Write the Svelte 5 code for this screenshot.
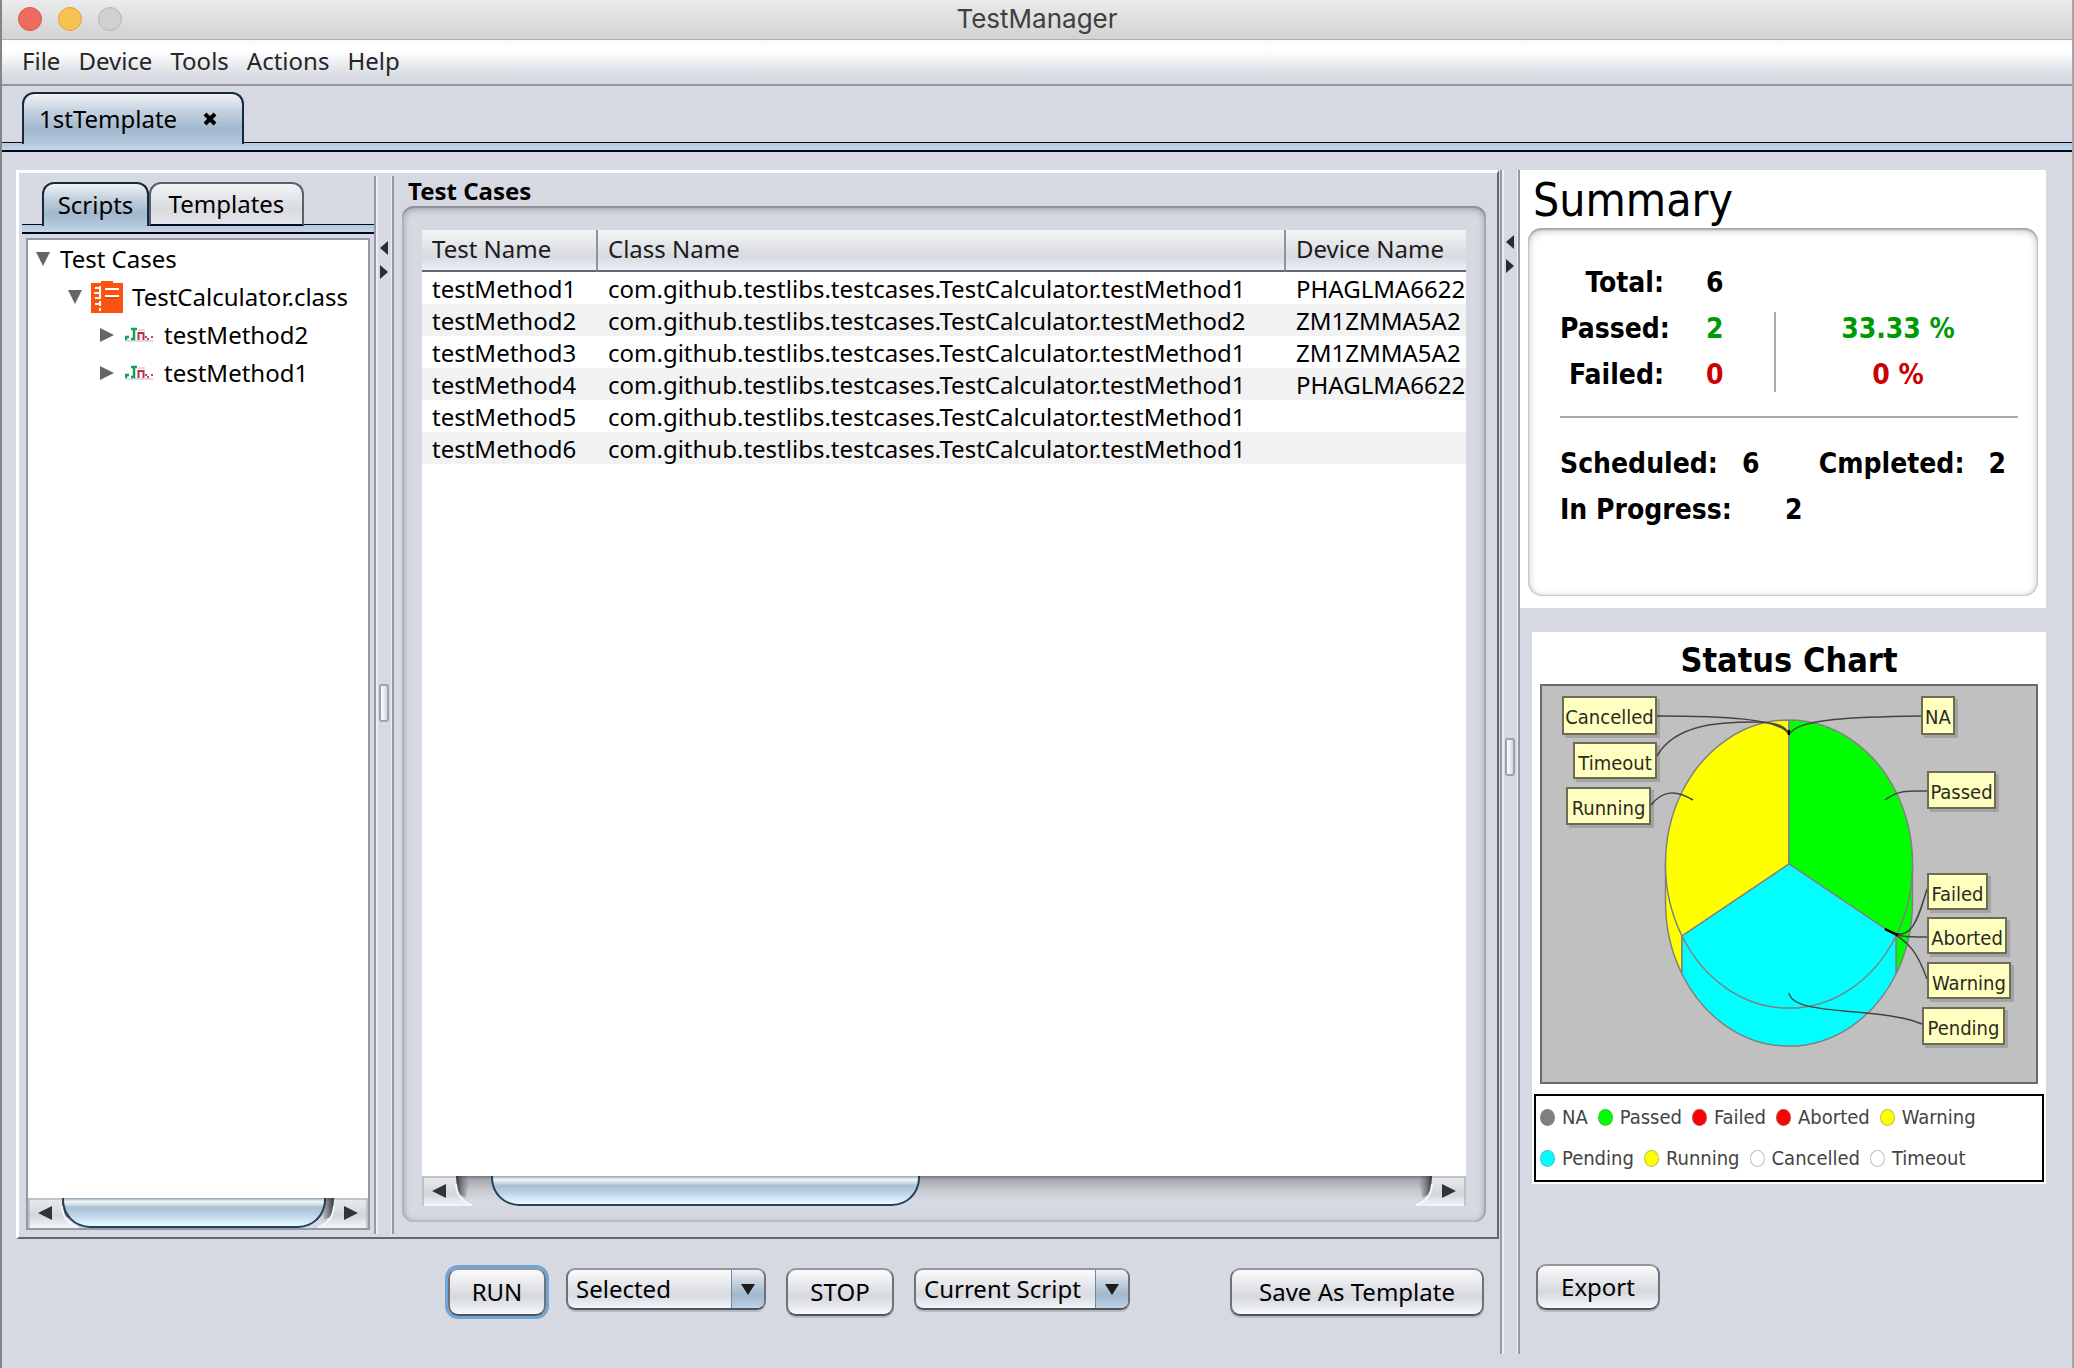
<script>
  const menus = ['File', 'Device', 'Tools', 'Actions', 'Help'];

  const prefix = 'com.github.testlibs.testcases.TestCalculator.';
  const rows = [
    { name: 'testMethod1', cls: prefix + 'testMethod1', device: 'PHAGLMA6622' },
    { name: 'testMethod2', cls: prefix + 'testMethod2', device: 'ZM1ZMMA5A2' },
    { name: 'testMethod3', cls: prefix + 'testMethod1', device: 'ZM1ZMMA5A2' },
    { name: 'testMethod4', cls: prefix + 'testMethod1', device: 'PHAGLMA6622' },
    { name: 'testMethod5', cls: prefix + 'testMethod1', device: '' },
    { name: 'testMethod6', cls: prefix + 'testMethod1', device: '' },
  ];

  const labels = [
    { text: 'Cancelled', x: 22, y: 12, w: 95, h: 39 },
    { text: 'Timeout', x: 33, y: 58, w: 84, h: 37 },
    { text: 'Running', x: 26, y: 103, w: 85, h: 38 },
    { text: 'NA', x: 381, y: 12, w: 34, h: 39 },
    { text: 'Passed', x: 387, y: 87, w: 69, h: 38 },
    { text: 'Failed', x: 387, y: 189, w: 61, h: 37 },
    { text: 'Aborted', x: 387, y: 233, w: 80, h: 37 },
    { text: 'Warning', x: 387, y: 278, w: 84, h: 37 },
    { text: 'Pending', x: 382, y: 323, w: 83, h: 38 },
  ];

  const legend = [
    [
      ['NA', 'gray'],
      ['Passed', 'green'],
      ['Failed', 'red'],
      ['Aborted', 'red'],
      ['Warning', 'yellow'],
    ],
    [
      ['Pending', 'cyan'],
      ['Running', 'yellow'],
      ['Cancelled', 'white'],
      ['Timeout', 'white'],
    ],
  ];

  let scope = $state('Selected');
  let source = $state('Current Script');
</script>

{#snippet splitter()}
  <div class="splitter" role="separator" aria-orientation="vertical">
    <button class="nudge" aria-label="Collapse left">
      <svg width="8" height="14" viewBox="0 0 8 14"><path d="M8 0V14L0 7Z" fill="#2b2b2d" /></svg>
    </button>
    <button class="nudge" aria-label="Collapse right">
      <svg width="8" height="14" viewBox="0 0 8 14"><path d="M0 0V14L8 7Z" fill="#2b2b2d" /></svg>
    </button>
    <span class="grip"></span>
  </div>
{/snippet}

{#snippet scrollEnd(dir)}
  <button class="scroll-end to-{dir}" aria-label="Scroll {dir}">
    <svg width="50" height="30" viewBox="0 0 50 30">
      <defs>
        <linearGradient id="end-{dir}" x1="0" y1="0" x2="0" y2="1">
          <stop offset="0" stop-color="#e9ecef" />
          <stop offset="0.6" stop-color="#d3d7db" />
          <stop offset="1" stop-color="#f4f6f9" />
        </linearGradient>
        <linearGradient id="shade-{dir}" x1="0" y1="0" x2="1" y2="0">
          <stop offset="0" stop-color="#333338" />
          <stop offset="1" stop-color="#77777d" stop-opacity="0" />
        </linearGradient>
      </defs>
      <g transform={dir === 'right' ? 'matrix(-1 0 0 1 50 0)' : null}>
        <path d="M34 0H48L44 22L36 18Z" fill="url(#shade-{dir})" />
        <path d="M0 0H34V8Q35 24 50 29V30H0Z" fill="url(#end-{dir})" />
        <path d="M34 8Q35 24 50 29" fill="none" stroke="#f7f8fa" stroke-width="2" />
        <path d="M0 1H34M1 0V30" stroke="#b4b8bd" stroke-width="1.5" />
        <path d="M24 8V22L10 15Z" fill="#333437" />
      </g>
    </svg>
  </button>
{/snippet}

{#snippet unitIcon()}
  <svg class="unit" width="28" height="16" viewBox="0 0 28 16" aria-hidden="true">
    <path d="M0 14H28" stroke="#dcdcdc" stroke-width="2" />
    <path d="M1 13V10H4M6 2H12M9 2V12H6" fill="none" stroke="#12a05c" stroke-width="2.5" />
    <path d="M13 3H20" stroke="#f6cdd3" stroke-width="2" />
    <path d="M13.500 5V13M18.500 5V13M13 6H19" fill="none" stroke="#b8324a" stroke-width="2" />
    <path d="M21 9V11M23 11V13M27 9V11" stroke="#c04558" stroke-width="2" />
  </svg>
{/snippet}

<div class="window">
  <header class="titlebar">
    <div class="lights">
      <button class="light close" aria-label="Close"></button>
      <button class="light min" aria-label="Minimize"></button>
      <button class="light max" aria-label="Zoom"></button>
    </div>
    <span class="title">TestManager</span>
    <div></div>
  </header>

  <nav class="menubar">
    {#each menus as m}
      <button>{m}</button>
    {/each}
  </nav>

  <div class="tabs main-tabs">
    <div class="tab active">
      <span>1stTemplate</span>
      <button class="tab-close" aria-label="Close tab">
        <svg width="14" height="14" viewBox="0 0 14 14"><path d="M2 2L12 12M12 2L2 12" stroke="#000" stroke-width="4" /></svg>
      </button>
    </div>
  </div>
  <div class="strip"></div>

  <main class="workspace">
    <section class="editor">
      <div class="panel">
        <div class="side">
          <div class="tabs side-tabs" role="tablist">
            <button class="tab active" role="tab" aria-selected="true">Scripts</button>
            <button class="tab" role="tab" aria-selected="false">Templates</button>
          </div>
          <div class="strip"></div>
          <div class="tree-box">
            <ul class="tree">
              <li class="lvl0">
                <svg width="14" height="14" viewBox="0 0 14 14"><path d="M0 0H14L7 14Z" fill="#666" /></svg>
                <span>Test Cases</span>
              </li>
              <li class="lvl1">
                <svg width="14" height="14" viewBox="0 0 14 14"><path d="M0 0H14L7 14Z" fill="#666" /></svg>
                <svg class="class-icon" width="32" height="32" viewBox="0 0 32 32" aria-hidden="true">
                  <path d="M0 2H10V0H22V2H32V32H0Z" fill="#fb5412" />
                  <path d="M9 5V30M4 7H9M3 12H9M4 17H9M4 23H9" fill="none" stroke="#fff" stroke-width="2" />
                  <path d="M14 8H28M14 15H28" stroke="#fff" stroke-width="2" />
                  <path d="M14 17H28" stroke="#c8410c" stroke-width="1" />
                  <path d="M9 18V20M9 25V27" stroke="#fb5412" stroke-width="3" />
                </svg>
                <span>TestCalculator.class</span>
              </li>
              {#each ['testMethod2', 'testMethod1'] as t}
                <li class="lvl2">
                  <svg width="14" height="14" viewBox="0 0 14 14"><path d="M0 0V14L14 7Z" fill="#666" /></svg>
                  {@render unitIcon()}
                  <span>{t}</span>
                </li>
              {/each}
            </ul>
            <div class="scrollbar">
              {@render scrollEnd('left')}
              <div class="track"><div class="thumb full"></div></div>
              {@render scrollEnd('right')}
            </div>
          </div>
        </div>

        {@render splitter()}

        <div class="cases">
          <h2>Test Cases</h2>
          <div class="group">
            <div class="table-box">
              <table>
                <colgroup><col class="c1" /><col class="c2" /><col /></colgroup>
                <thead>
                  <tr><th>Test Name</th><th>Class Name</th><th>Device Name</th></tr>
                </thead>
                <tbody>
                  {#each rows as r}
                    <tr><td>{r.name}</td><td>{r.cls}</td><td>{r.device}</td></tr>
                  {/each}
                </tbody>
              </table>
            </div>
            <div class="scrollbar">
              {@render scrollEnd('left')}
              <div class="track"><div class="thumb part"></div></div>
              {@render scrollEnd('right')}
            </div>
          </div>
        </div>
      </div>

      <div class="toolbar">
        <button class="btn run">RUN</button>
        <div class="combo scope">
          <select bind:value={scope} aria-label="Run scope">
            <option>Selected</option>
            <option>All</option>
          </select>
          <span class="arrow"><svg width="14" height="11" viewBox="0 0 14 11"><path d="M0 0H14L7 11Z" fill="#1d1d1f" /></svg></span>
        </div>
        <button class="btn stop">STOP</button>
        <div class="combo source">
          <select bind:value={source} aria-label="Stop target">
            <option>Current Script</option>
            <option>All Scripts</option>
          </select>
          <span class="arrow"><svg width="14" height="11" viewBox="0 0 14 11"><path d="M0 0H14L7 11Z" fill="#1d1d1f" /></svg></span>
        </div>
        <button class="btn save">Save As Template</button>
      </div>
    </section>

    {@render splitter()}

    <aside class="report">
      <section class="summary">
        <h1>Summary</h1>
        <div class="summary-box">
          <div class="results">
            <div class="counts">
              <span class="k">Total:</span><span>6</span>
              <span class="k">Passed:</span><span class="ok">2</span>
              <span class="k">Failed:</span><span class="bad">0</span>
            </div>
            <div class="rates">
              <span class="ok">33.33 %</span>
              <span class="bad">0 %</span>
            </div>
          </div>
          <hr />
          <div class="progress">
            <span class="pair"><span>Scheduled:</span><span>6</span></span>
            <span class="pair"><span>Cmpleted:</span><span>2</span></span>
          </div>
          <div class="progress wide"><span>In Progress:</span><span>2</span></div>
        </div>
      </section>

      <section class="chart">
        <h2>Status Chart</h2>
        <svg class="plot" viewBox="0 0 498 400" role="img" aria-label="Pie chart of test status">
          <rect x="1" y="1" width="496" height="398" fill="#c0c0c0" stroke="#6b6b6b" stroke-width="2" />
          <g stroke="#808080" stroke-width="1.500">
            <path d="M125.500 180V218A123.500 144 0 0 0 142 290V252Z" fill="#ff0" />
            <path d="M372.500 180V218A123.500 144 0 0 1 356 290V252Z" fill="#0f0" />
            <path d="M142 252V290A123.500 144 0 0 0 356 290V252L249 180Z" fill="#0ff" />
            <path d="M249 180V36A123.500 144 0 0 0 142 252Z" fill="#ff0" />
            <path d="M249 180V36A123.500 144 0 0 1 356 252Z" fill="#0f0" />
            <path d="M249 180L142 252A123.500 144 0 0 0 356 252Z" fill="#0ff" />
          </g>
          <g fill="none" stroke="#444" stroke-width="1.500">
            <path d="M117 32C180 32 242 34 249 51" />
            <path d="M117 72C135 40 180 38 215 38C235 38 247 42 249 51" />
            <path d="M381 32C318 33 256 34 249 51" />
            <path d="M111 121C122 107 135 105 153 116" />
            <path d="M387 107C368 107 358 106 345 116" />
            <path d="M387 205C378 235 371 262 345 245" />
            <path d="M387 253C365 253 358 253 345 245" />
            <path d="M387 295C378 270 370 257 345 245" />
            <path d="M249 309C253 333 340 322 382 340" />
          </g>
          <path d="M345 245L358 251M249 46V51" stroke="#000" stroke-width="2" />
          {#each labels as l}
            <rect x={l.x + 3} y={l.y + 3} width={l.w} height={l.h} fill="#000" opacity="0.150" />
            <rect x={l.x + 1} y={l.y + 1} width={l.w - 2} height={l.h - 2} fill="#ffffc0" stroke="#6c6c52" stroke-width="2" />
            <text x={l.x + l.w / 2} y={l.y + 28} text-anchor="middle">{l.text}</text>
          {/each}
        </svg>
        <div class="legend">
          {#each legend as line}
            <div class="legend-row">
              {#each line as [name, color]}
                <span class="entry"><i class="dot {color}"></i>{name}</span>
              {/each}
            </div>
          {/each}
        </div>
      </section>

      <button class="btn export">Export</button>
    </aside>
  </main>
</div>

<style>
  :global(body) {
    background: #d6d9e1;
  }
  .window,
  .window * {
    box-sizing: border-box;
  }
  .window {
    min-height: 100vh;
    display: flex;
    flex-direction: column;
    border-left: 2px solid #858587;
    border-right: 2px solid #a3a5ab;
    background: #d6d9e1;
    color: #000;
    font: 24px/32px 'Noto Sans', 'Open Sans', sans-serif;
  }
  button,
  select {
    font: inherit;
    color: inherit;
    margin: 0;
    padding: 0;
    border: 0;
    background: none;
  }
  svg {
    display: block;
    flex: none;
  }
  h1,
  h2 {
    margin: 0;
  }

  /* title bar and menus */
  .titlebar {
    height: 40px;
    display: grid;
    grid-template-columns: 1fr auto 1fr;
    align-items: center;
    padding-bottom: 2px;
    background: linear-gradient(#ebebeb, #d2d2d2);
    border-bottom: 1px solid #b0b0b0;
  }
  .lights {
    display: flex;
    gap: 16px;
    padding-left: 16px;
  }
  .light {
    width: 24px;
    height: 24px;
    border-radius: 50%;
    border: 1px solid;
  }
  .close {
    background: #ef6b60;
    border-color: #d9564c;
  }
  .min {
    background: #f6c251;
    border-color: #dca53b;
  }
  .max {
    background: #d0d0d0;
    border-color: #b5b5b5;
  }
  .title {
    font: 26px/32px Inter, Roboto, sans-serif;
    color: #404040;
  }
  .menubar {
    height: 46px;
    display: flex;
    align-items: center;
    gap: 18px;
    padding: 0 0 2px 20px;
    background: linear-gradient(#fafbfb, #fff 25%, #d6d9e1 85%);
    border-bottom: 2px solid #9297a3;
    color: #262626;
  }

  /* tabs */
  .tabs {
    display: flex;
    position: relative;
    z-index: 1;
  }
  .main-tabs {
    padding: 6px 0 0 20px;
    margin-bottom: -2px;
  }
  .tab {
    height: 44px;
    border: 2px solid #5b5f69;
    border-bottom-color: #0a0a20;
    border-radius: 12px 12px 0 0;
    background: linear-gradient(#f3f4f6, #d9dbe0 60%, #e3e5ec);
  }
  .tab.active {
    border-color: #15283c;
    border-bottom: 0;
    background: linear-gradient(#f0f3f7, #c4d1de 35%, #a2b8cd 70%, #b3c8dc);
  }
  .main-tabs .tab {
    height: 52px;
    width: 222px;
    display: flex;
    align-items: center;
    gap: 26px;
    padding-left: 15px;
  }
  .side-tabs {
    padding: 6px 0 0 20px;
    margin-bottom: -2px;
  }
  .side-tabs .tab {
    width: 155px;
  }
  .side-tabs .tab.active {
    width: 107px;
  }
  .strip {
    height: 10px;
    border-top: 1px solid #0a0a20;
    border-bottom: 2px solid #05051c;
    background: linear-gradient(#b3c9de, #c3d7e9);
  }

  /* main layout */
  .workspace {
    flex: 1;
    display: flex;
    padding: 18px 26px 14px 14px;
  }
  .editor {
    flex: 1;
    min-width: 0;
    display: flex;
    flex-direction: column;
  }
  .panel {
    flex: 1;
    display: flex;
    margin-right: 1px;
    padding: 3px;
    border: solid #fff;
    border-width: 3px 2px 2px 3px;
    border-right-color: #66686c;
    border-bottom-color: #66686c;
  }
  .splitter {
    flex: none;
    width: 20px;
    display: flex;
    flex-direction: column;
    align-items: center;
    gap: 10px;
    padding-top: 65px;
    position: relative;
    border: solid #9599a6;
    border-width: 0 2px;
    box-shadow:
      inset 2px 0 #eceef2,
      inset -1px 0 #eceef2;
  }
  .nudge {
    height: 14px;
  }
  .grip {
    position: absolute;
    top: 48%;
    left: 3px;
    width: 10px;
    height: 38px;
    border: 2px solid #9ca1ae;
    border-radius: 3px;
    background: linear-gradient(90deg, #fff, #d6d9e1);
  }
  .side {
    flex: none;
    width: 352px;
    display: flex;
    flex-direction: column;
  }
  .tree-box {
    flex: 1;
    display: flex;
    flex-direction: column;
    margin: 4px;
    border: 2px solid #9599a6;
    background: #fff;
  }
  .tree {
    flex: 1;
    list-style: none;
    margin: 0;
    padding: 0 0 0 8px;
    line-height: 38px;
    white-space: nowrap;
  }
  .tree li {
    display: flex;
    align-items: center;
    height: 38px;
  }
  .lvl0 {
    gap: 10px;
  }
  .lvl1 {
    gap: 9px;
    padding-left: 32px;
  }
  .lvl2 {
    gap: 11px;
    padding-left: 64px;
  }

  /* scroll bars */
  .scrollbar {
    height: 30px;
    display: flex;
    background: linear-gradient(#77777d, #a9aab0 12%, #c9cad0 50%, #d6d9e1 80%);
  }
  .scroll-end {
    flex: none;
    width: 34px;
    height: 30px;
    display: flex;
  }
  .to-right {
    justify-content: flex-end;
  }
  .track {
    flex: 1;
    position: relative;
    z-index: 1;
  }
  .thumb {
    height: 30px;
    border: solid #23405a;
    border-width: 0 2px 2px;
    border-radius: 0 0 28px 28px;
    background: linear-gradient(#8fa3b5, #f2f5f8 12%, #dfe6ee 20%, #a9bfd3 35%, #bcd2e8 60%, #eafcff);
  }
  .thumb.full {
    margin-right: 8px;
  }
  .thumb.part {
    margin-left: 35px;
    width: 44%;
  }

  /* test case table */
  .cases {
    flex: 1;
    min-width: 0;
    display: flex;
    flex-direction: column;
    padding: 0 8px 12px;
  }
  .cases h2 {
    font-size: 24px;
    line-height: 30px;
    padding-left: 6px;
  }
  .group {
    flex: 1;
    display: flex;
    flex-direction: column;
    padding: 24px 20px 16px;
    border-radius: 12px;
    box-shadow:
      inset 0 2px #8f9196,
      inset 2px 0 1px #b1b3b9,
      inset -2px 0 1px #a6a8ae,
      inset 0 -2px #bcbec3,
      inset 0 2px 9px #8c8e94;
  }
  .table-box {
    flex: 1;
    overflow: hidden;
    background: #fff;
  }
  table {
    width: 100%;
    table-layout: fixed;
    border-collapse: separate;
    border-spacing: 0;
  }
  .c1 {
    width: 176px;
  }
  .c2 {
    width: 688px;
  }
  th,
  td {
    text-align: left;
    padding: 0 0 0 10px;
    white-space: nowrap;
    overflow: hidden;
  }
  th {
    height: 42px;
    padding-bottom: 2px;
    font-weight: 400;
    color: #1c1c1c;
    border-bottom: 2px solid #62676f;
    border-right: 2px solid #9094a0;
    background: linear-gradient(#f5f6f7, #d8dae0 65%, #eceff7);
  }
  th:last-child {
    border-right: 0;
  }
  td {
    height: 32px;
    padding-top: 2px;
    line-height: 30px;
  }
  tbody tr:nth-child(even) {
    background: #f2f2f2;
  }

  /* buttons */
  .toolbar {
    display: flex;
    align-items: flex-start;
    gap: 20px;
    height: 115px;
    padding: 29px 16px 0 432px;
  }
  .btn {
    height: 48px;
    border: 2px solid;
    border-color: #93979e #6e7178 #505259;
    border-radius: 10px;
    box-shadow: 0 2px #b6b9c0;
    background: linear-gradient(#fbfbfc, #e3e4e8 40%, #d5d8dd 62%, #f7f9ff);
  }
  .run {
    width: 98px;
    box-shadow: 0 0 0 3px #72a5d6;
  }
  .stop {
    width: 108px;
  }
  .save {
    width: 254px;
    margin-left: auto;
  }
  .export {
    width: 124px;
    height: 46px;
    margin: 80px 0 0 16px;
  }
  .combo {
    height: 42px;
    display: grid;
    border: 2px solid;
    border-color: #93979e #6e7178 #505259;
    border-radius: 9px;
    overflow: hidden;
    background: linear-gradient(#fbfbfc, #e0e1e6 50%, #d8dae0 65%, #f2f4fb);
    box-shadow: 0 2px #b6b9c0;
  }
  .scope {
    width: 200px;
  }
  .source {
    width: 216px;
  }
  .combo select,
  .arrow {
    grid-area: 1 / 1;
  }
  .combo select {
    appearance: none;
    padding: 0 0 0 8px;
    outline: 0;
  }
  .arrow {
    justify-self: end;
    width: 33px;
    display: flex;
    align-items: center;
    justify-content: center;
    border-left: 1px solid #6d8aa5;
    background: linear-gradient(#edf1f5, #bccbd9 40%, #a2b8cd 65%, #bcd2e8);
    pointer-events: none;
  }

  /* summary */
  .report {
    flex: none;
    width: 526px;
    font-family: 'DejaVu Sans Condensed', 'DejaVu Sans', sans-serif;
  }
  .btn.export {
    font-family: 'Noto Sans', 'Open Sans', sans-serif;
  }
  .summary {
    padding: 2px 8px 12px;
    background: #fff;
  }
  .summary h1 {
    font-size: 46px;
    font-weight: 400;
    line-height: 56px;
    padding-left: 5px;
  }
  .summary-box {
    height: 368px;
    padding: 32px 20px 0 32px;
    border-radius: 14px;
    font-size: 28px;
    font-weight: 700;
    line-height: 46px;
    box-shadow:
      inset 0 2px 1px #aaa,
      inset 0 0 2px 1px #c4c4c4,
      inset 0 2px 8px #bbb;
  }
  .results {
    display: flex;
    align-items: flex-end;
  }
  .counts {
    width: 214px;
    display: grid;
    grid-template-columns: 104px auto;
    column-gap: 42px;
  }
  .k {
    text-align: right;
  }
  .rates {
    flex: 1;
    display: grid;
    justify-items: center;
    padding-left: 4px;
    background: linear-gradient(#a6a9b4, #a6a9b4) 0 6px / 2px 80px no-repeat;
  }
  .ok {
    color: #090;
  }
  .bad {
    color: #c00;
  }
  hr {
    height: 2px;
    margin: 18px 0 23px;
    border: 0;
    background: #a6a9b4;
  }
  .progress {
    display: flex;
    justify-content: space-between;
    padding-right: 12px;
  }
  .progress.wide {
    justify-content: flex-start;
    gap: 53px;
  }
  .pair {
    display: flex;
    gap: 24px;
  }

  /* chart */
  .chart {
    margin: 24px 0 0 12px;
    padding: 4px 2px 2px;
    background: #fff;
  }
  .chart h2 {
    font-size: 34px;
    line-height: 48px;
    text-align: center;
  }
  .plot {
    width: 498px;
    max-width: 100%;
    margin: 0 6px;
  }
  .plot text {
    font-size: 20px;
    fill: #2b2b20;
  }
  .legend {
    margin-top: 10px;
    padding: 1px 4px;
    border: 2px solid #000;
    font-size: 20px;
    line-height: 41px;
    color: #444;
  }
  .legend-row {
    display: flex;
    gap: 10px;
  }
  .entry {
    display: flex;
    align-items: center;
    gap: 7px;
  }
  .dot {
    width: 15px;
    height: 17px;
    border-radius: 50%;
    border: 1px solid rgba(128, 128, 128, 0.5);
  }
  .gray {
    background: #808080;
  }
  .green {
    background: #0f0;
  }
  .red {
    background: #f00;
  }
  .yellow {
    background: #ff0;
  }
  .cyan {
    background: #0ff;
  }
  .white {
    background: #fff;
  }
</style>
